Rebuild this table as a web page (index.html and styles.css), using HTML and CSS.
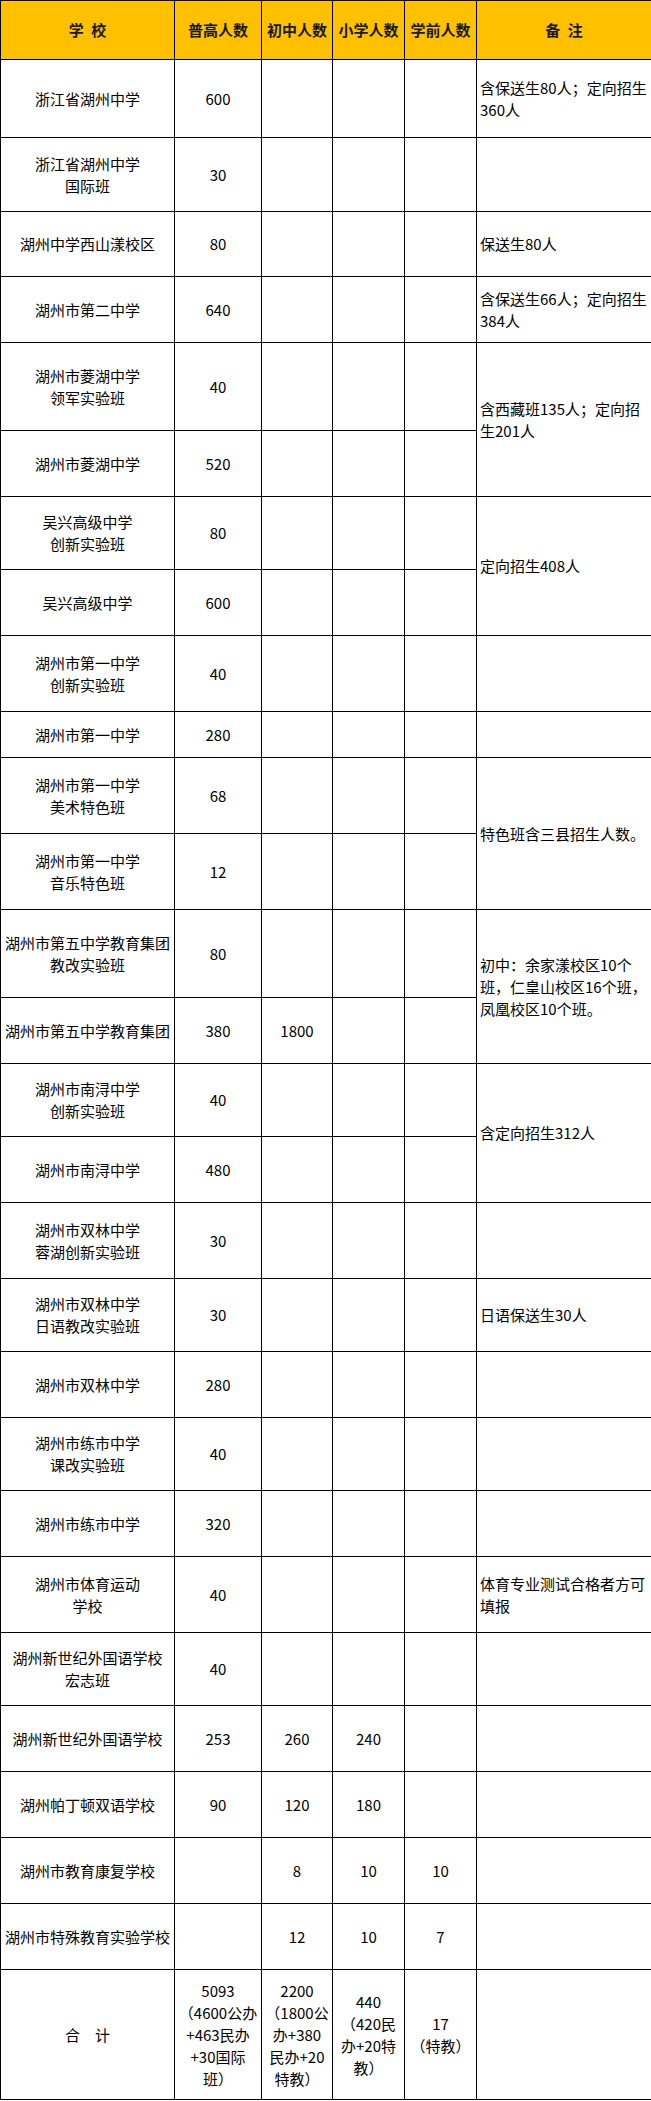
FILE: index.html
```html
<!DOCTYPE html>
<html lang="zh-CN">
<head>
<meta charset="utf-8">
<title>招生计划</title>
<link rel="stylesheet" href="styles.css">
</head>
<body>
<table class="plan">
  <colgroup>
    <col class="c-school"><col class="c-num1"><col class="c-num2"><col class="c-num3"><col class="c-num4"><col class="c-note">
  </colgroup>
  <thead>
    <tr class="h59">
      <th>学&ensp;校</th><th>普高人数</th><th>初中人数</th><th>小学人数</th><th>学前人数</th><th>备&ensp;注</th>
    </tr>
  </thead>
  <tbody>
    <tr class="h78"><td>浙江省湖州中学</td><td>600</td><td></td><td></td><td></td><td class="note">含保送生80人；定向招生360人</td></tr>
    <tr class="h74"><td>浙江省湖州中学<br>国际班</td><td>30</td><td></td><td></td><td></td><td class="note"></td></tr>
    <tr class="h65"><td>湖州中学西山漾校区</td><td>80</td><td></td><td></td><td></td><td class="note">保送生80人</td></tr>
    <tr class="h66"><td>湖州市第二中学</td><td>640</td><td></td><td></td><td></td><td class="note">含保送生66人；定向招生384人</td></tr>
    <tr class="h88"><td>湖州市菱湖中学<br>领军实验班</td><td>40</td><td></td><td></td><td></td><td class="note" rowspan="2">含西藏班135人；定向招生201人</td></tr>
    <tr class="h66"><td>湖州市菱湖中学</td><td>520</td><td></td><td></td><td></td></tr>
    <tr class="h73"><td>吴兴高级中学<br>创新实验班</td><td>80</td><td></td><td></td><td></td><td class="note" rowspan="2">定向招生408人</td></tr>
    <tr class="h66"><td>吴兴高级中学</td><td>600</td><td></td><td></td><td></td></tr>
    <tr class="h76"><td>湖州市第一中学<br>创新实验班</td><td>40</td><td></td><td></td><td></td><td class="note"></td></tr>
    <tr class="h46"><td>湖州市第一中学</td><td>280</td><td></td><td></td><td></td><td class="note"></td></tr>
    <tr class="h76"><td>湖州市第一中学<br>美术特色班</td><td>68</td><td></td><td></td><td></td><td class="note" rowspan="2">特色班含三县招生人数。</td></tr>
    <tr class="h76"><td>湖州市第一中学<br>音乐特色班</td><td>12</td><td></td><td></td><td></td></tr>
    <tr class="h88"><td>湖州市第五中学教育集团<br>教改实验班</td><td>80</td><td></td><td></td><td></td><td class="note" rowspan="2">初中：余家漾校区10个班，仁皇山校区16个班，凤凰校区10个班。</td></tr>
    <tr class="h66"><td>湖州市第五中学教育集团</td><td>380</td><td>1800</td><td></td><td></td></tr>
    <tr class="h73"><td>湖州市南浔中学<br>创新实验班</td><td>40</td><td></td><td></td><td></td><td class="note" rowspan="2">含定向招生312人</td></tr>
    <tr class="h66"><td>湖州市南浔中学</td><td>480</td><td></td><td></td><td></td></tr>
    <tr class="h76"><td>湖州市双林中学<br>蓉湖创新实验班</td><td>30</td><td></td><td></td><td></td><td class="note"></td></tr>
    <tr class="h73"><td>湖州市双林中学<br>日语教改实验班</td><td>30</td><td></td><td></td><td></td><td class="note">日语保送生30人</td></tr>
    <tr class="h66"><td>湖州市双林中学</td><td>280</td><td></td><td></td><td></td><td class="note"></td></tr>
    <tr class="h73"><td>湖州市练市中学<br>课改实验班</td><td>40</td><td></td><td></td><td></td><td class="note"></td></tr>
    <tr class="h66"><td>湖州市练市中学</td><td>320</td><td></td><td></td><td></td><td class="note"></td></tr>
    <tr class="h76"><td>湖州市体育运动<br>学校</td><td>40</td><td></td><td></td><td></td><td class="note">体育专业测试合格者方可填报</td></tr>
    <tr class="h73"><td>湖州新世纪外国语学校<br>宏志班</td><td>40</td><td></td><td></td><td></td><td class="note"></td></tr>
    <tr class="h66"><td>湖州新世纪外国语学校</td><td>253</td><td>260</td><td>240</td><td></td><td class="note"></td></tr>
    <tr class="h66"><td>湖州帕丁顿双语学校</td><td>90</td><td>120</td><td>180</td><td></td><td class="note"></td></tr>
    <tr class="h66"><td>湖州市教育康复学校</td><td></td><td>8</td><td>10</td><td>10</td><td class="note"></td></tr>
    <tr class="h66"><td>湖州市特殊教育实验学校</td><td></td><td>12</td><td>10</td><td>7</td><td class="note"></td></tr>
    <tr class="h130"><td>合　计</td><td>5093<br>（4600公办<br>+463民办<br>+30国际<br>班）</td><td>2200<br>（1800公<br>办+380<br>民办+20<br>特教）</td><td>440<br>（420民<br>办+20特<br>教）</td><td>17<br>（特教）</td><td class="note"></td></tr>
  </tbody>
</table>
</body>
</html>
```

FILE: styles.css
```css
html, body {
  margin: 0;
  padding: 0;
  background: #ffffff;
}

body {
  font-family: "Noto Sans CJK SC", "Noto Sans", sans-serif;
  font-size: 15px;
  color: #000000;
}

.plan {
  border-collapse: collapse;
  table-layout: fixed;
  width: 651px;
}

.c-school { width: 174px; }
.c-num1 { width: 87px; }
.c-num2 { width: 71px; }
.c-num3 { width: 72px; }
.c-num4 { width: 72px; }
.c-note { width: 175px; }

.plan th,
.plan td {
  border: 1px solid #000000;
  padding: 0;
  text-align: center;
  vertical-align: middle;
  line-height: 22px;
  font-size: 15px;
  overflow: hidden;
}

.plan th {
  background: #ffc000;
  font-weight: bold;
  color: #1a1a1a;
}

.plan td.note {
  text-align: left;
  padding: 0 2px 0 3px;
}

.h46 { height: 46px; }
.h59 { height: 59px; }
.h65 { height: 65px; }
.h66 { height: 66px; }
.h73 { height: 73px; }
.h74 { height: 74px; }
.h76 { height: 76px; }
.h78 { height: 78px; }
.h88 { height: 88px; }
.h130 { height: 130px; }
```
